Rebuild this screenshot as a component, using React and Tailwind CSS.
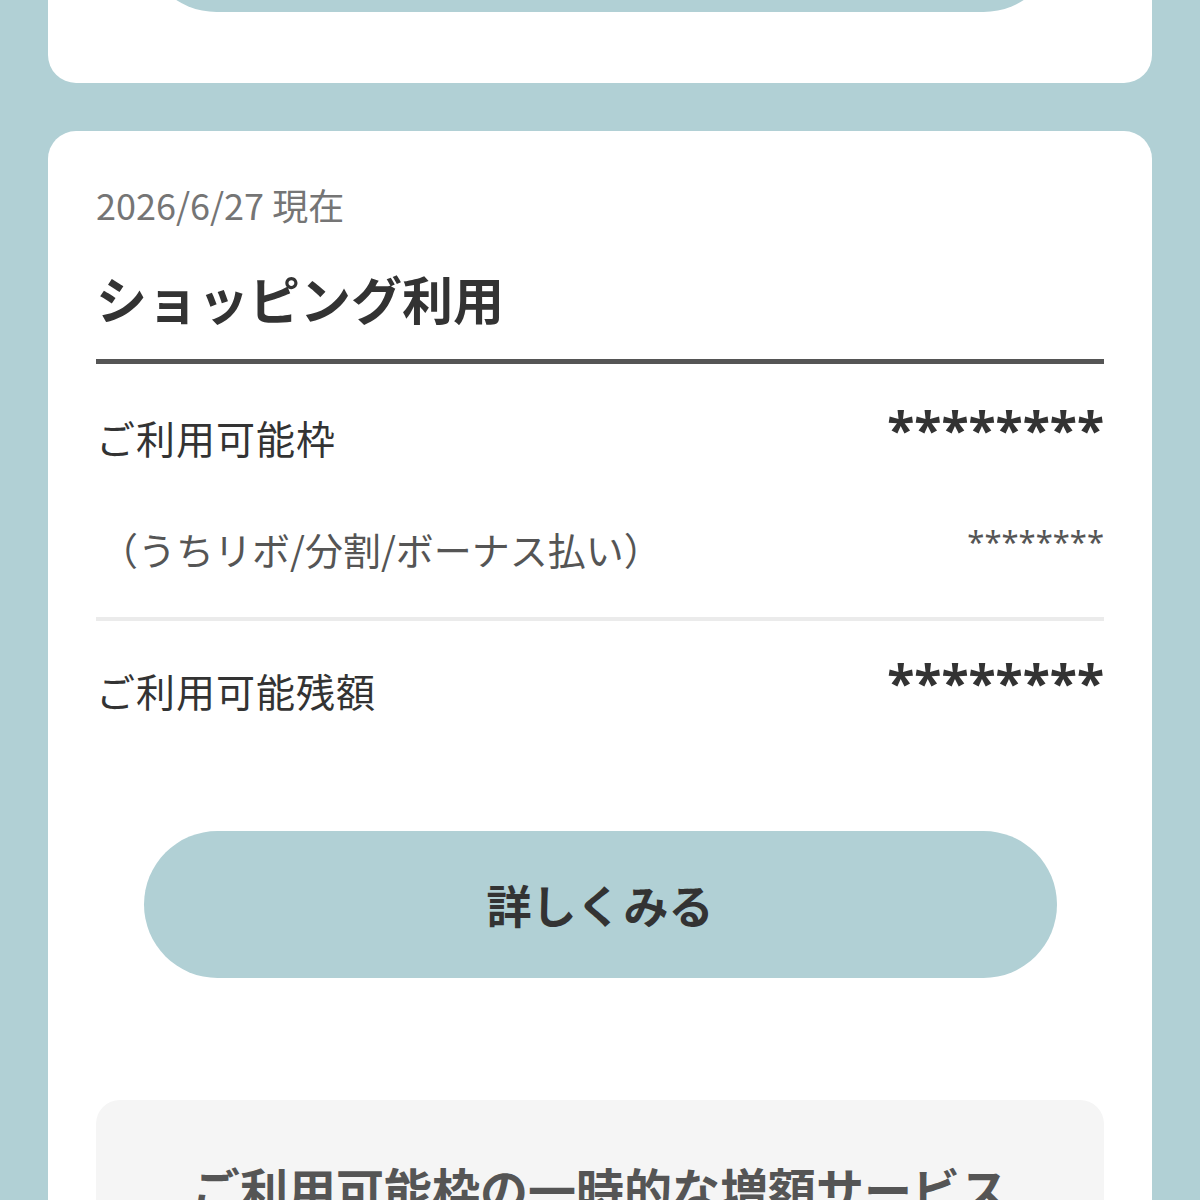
const font = { fontFamily: '"Noto Sans CJK JP", "Noto Sans", sans-serif' }
const stars = { fontFamily: '"Noto Sans", "Noto Sans CJK JP", sans-serif' }

function Row({ label, value, sub }) {
  if (sub) {
    return (
      <div className="flex items-start justify-between">
        <span className="pl-1 text-[38px] leading-[56px] text-[#555555]">{label}</span>
        <span style={stars} className="text-[31px] leading-[40px] text-[#555555]">{value}</span>
      </div>
    )
  }
  return (
    <div className="flex items-start justify-between">
      <span className="text-[39px] leading-[60px] tracking-[1px] text-[#333333]">{label}</span>
      <span style={stars} className="text-[50px] font-bold leading-[44px] text-[#333333]">{value}</span>
    </div>
  )
}

export default function App() {
  return (
    <div style={font} className="h-[1200px] overflow-hidden bg-[#b1d0d5] px-12">
      {/* previous card, mostly scrolled away */}
      <div className="mt-[-196px] rounded-[28px] bg-white px-[95px] pb-[71px] pt-[61px]">
        <div className="h-[147px] rounded-full bg-[#b1d0d5]" />
      </div>

      <div className="mt-12 rounded-[28px] bg-white px-12 pb-12 pt-[48px]">
        <p className="text-[36px] leading-[51px] text-[#757575]">2026/6/27 現在</p>
        <h2 className="mt-[38px] text-[51px] font-bold leading-[60px] text-[#333333]">
          ショッピング利用
        </h2>
        <div className="mt-[31px] h-[5px] bg-[#555555]" />

        <div className="mt-[43px]">
          <Row label="ご利用可能枠" value="********" />
        </div>
        <div className="mt-[54px]">
          <Row sub label="（うちリボ/分割/ボーナス払い）" value="********" />
        </div>
        <div className="mt-[40px] h-[4px] bg-[#ebebeb]" />
        <div className="mt-[39px]">
          <Row label="ご利用可能残額" value="********" />
        </div>

        <div className="mt-[111px] flex justify-center">
          <button className="h-[147px] w-[913px] rounded-full bg-[#b1d0d5] text-[45px] font-bold text-[#333333]">
            詳しくみる
          </button>
        </div>

        <div className="mt-[122px] rounded-[24px] bg-[#f5f5f5] px-8 pb-16 pt-[56px] text-center">
          <h3 className="text-[48px] font-bold leading-[64px] text-[#555555]">
            ご利用可能枠の一時的な増額サービス
          </h3>
        </div>
      </div>
    </div>
  )
}
